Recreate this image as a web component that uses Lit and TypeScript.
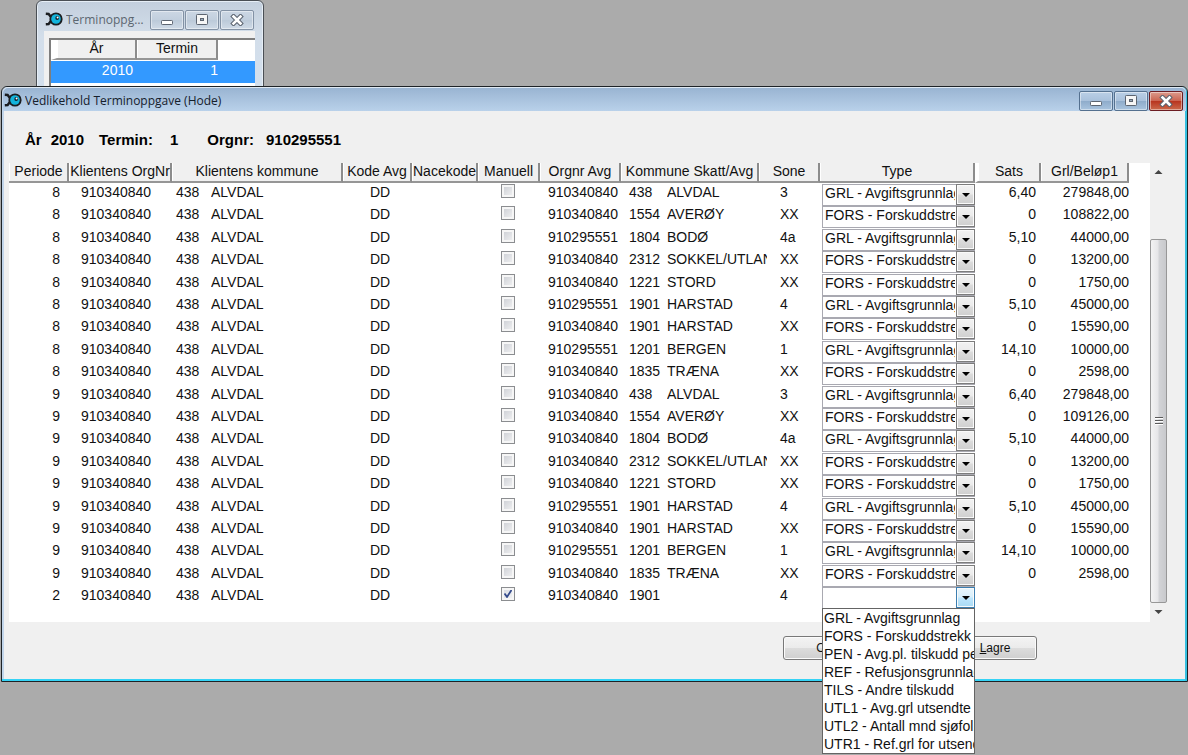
import { LitElement, html, css, svg, nothing } from "lit";
import { customElement, property } from "lit/decorators.js";
import { classMap } from "lit/directives/class-map.js";

interface Row {
  periode: number;
  avgOrg: string;
  nr: string;
  kommune: string;
  sone: string;
  type: string;
  sats: string;
  belop: string;
  manuell?: boolean;
}

const TYPES: Record<string, string> = {
  GRL: "GRL - Avgiftsgrunnlag",
  FORS: "FORS - Forskuddstrekk",
  PEN: "PEN - Avg.pl. tilskudd pensjon",
  REF: "REF - Refusjonsgrunnlag",
  TILS: "TILS - Andre tilskudd",
  UTL1: "UTL1 - Avg.grl utsendte arb.",
  UTL2: "UTL2 - Antall mnd sjøfolk",
  UTR1: "UTR1 - Ref.grl for utsendte",
};

const A = "910340840";
const B = "910295551";

const period = (periode: number, avgBelop: string): Row[] => [
  { periode, avgOrg: A, nr: "438", kommune: "ALVDAL", sone: "3", type: "GRL", sats: "6,40", belop: "279848,00" },
  { periode, avgOrg: A, nr: "1554", kommune: "AVERØY", sone: "XX", type: "FORS", sats: "0", belop: avgBelop },
  { periode, avgOrg: periode === 8 ? B : A, nr: "1804", kommune: "BODØ", sone: "4a", type: "GRL", sats: "5,10", belop: "44000,00" },
  { periode, avgOrg: A, nr: "2312", kommune: "SOKKEL/UTLAND", sone: "XX", type: "FORS", sats: "0", belop: "13200,00" },
  { periode, avgOrg: A, nr: "1221", kommune: "STORD", sone: "XX", type: "FORS", sats: "0", belop: "1750,00" },
  { periode, avgOrg: B, nr: "1901", kommune: "HARSTAD", sone: "4", type: "GRL", sats: "5,10", belop: "45000,00" },
  { periode, avgOrg: A, nr: "1901", kommune: "HARSTAD", sone: "XX", type: "FORS", sats: "0", belop: "15590,00" },
  { periode, avgOrg: B, nr: "1201", kommune: "BERGEN", sone: "1", type: "GRL", sats: "14,10", belop: "10000,00" },
  { periode, avgOrg: A, nr: "1835", kommune: "TRÆNA", sone: "XX", type: "FORS", sats: "0", belop: "2598,00" },
];

const ROWS: Row[] = [
  ...period(8, "108822,00"),
  ...period(9, "109126,00"),
  { periode: 2, avgOrg: A, nr: "1901", kommune: "", sone: "4", type: "", sats: "", belop: "", manuell: true },
];

const HEADS: [string, string][] = [
  ["Periode", "periode"],
  ["Klientens OrgNr", "org"],
  ["Klientens kommune", "kommune"],
  ["Kode Avg", "kode"],
  ["Nacekode", "nace"],
  ["Manuell", "manuell"],
  ["Orgnr Avg", "avgorg"],
  ["Kommune Skatt/Avg", "skatt"],
  ["Sone", "sone"],
  ["Type", "type"],
  ["Sats", "sats"],
  ["Grl/Beløp1", "belop"],
];

@customElement("window-bar")
class WindowBar extends LitElement {
  @property() label = "";
  @property({ type: Boolean, reflect: true }) active = false;

  static styles = css`
    :host { display: flex; align-items: flex-start; gap: 3px; min-width: 0; }
    .icon { flex: none; width: 18px; height: 18px; }
    .title {
      flex: 1; min-width: 0; overflow: hidden; white-space: nowrap; text-overflow: ellipsis;
      font: 12px/19px "Open Sans", "Noto Sans", sans-serif; color: #5c6670; margin: 0;
    }
    .buttons { display: flex; gap: 1px; }
    button {
      width: 34px; height: 20px; padding: 0; box-sizing: border-box; display: grid; place-items: center;
      border: 1px solid #8392a5; border-radius: 2px; box-shadow: inset 0 0 0 1px #ffffff70;
      background: linear-gradient(#ccd7e4, #c2cfde 48%, #bccad9 52%, #cfdae6);
    }
    svg { display: block; }
    :host([active]) .title { color: #15202c; }
    :host([active]) button {
      border-color: #54708f; background: linear-gradient(#bacfe6, #a9c1dc 48%, #8faccb 52%, #a9c4df);
    }
    :host([active]) .close {
      border-color: #6b1c22; background: linear-gradient(#dc9b8d, #cb6552 48%, #b8351f 52%, #cb6a4c);
    }
  `;

  render() {
    return html`
      <svg class="icon" viewBox="0 0 18 18" aria-hidden="true">
        <path d="M.8 3.800L3.600 4 7.500 9 3.600 14 .8 14.200" fill="none" stroke="#1b1d20" stroke-width="2.400"/>
        <circle cx="11" cy="9" r="6.600" fill="#1b1d20"/>
        <circle cx="11" cy="9" r="4.800" fill="#12b4dc"/>
        <circle cx="12.200" cy="8" r="1.900" fill="#10222c"/>
        <circle cx="12.600" cy="7.600" r="1" fill="#fff"/>
      </svg>
      <h2 class="title">${this.label}</h2>
      <div class="buttons">
        <button aria-label="Minimer">
          <svg width="12" height="12"><rect x=".5" y="6.500" width="11" height="4" rx=".8" fill="#fff" stroke="#5c6470"/></svg>
        </button>
        <button aria-label="Maksimer">
          <svg width="12" height="12"><rect x=".5" y=".5" width="11" height="10" rx=".8" fill="#f6f6f6" stroke="#5c6470"/><rect x="4.500" y="4.500" width="3" height="2" fill="#9ab" stroke="#5c6470"/></svg>
        </button>
        <button class="close" aria-label="Lukk">
          <svg width="14" height="12"><path d="M3.500 2.500l7 7M10.500 2.500l-7 7" stroke="#5c6470" stroke-width="4.600" stroke-linecap="square"/><path d="M3.500 2.500l7 7M10.500 2.500l-7 7" stroke="#fff" stroke-width="2.600" stroke-linecap="square"/></svg>
        </button>
      </div>`;
  }
}

@customElement("app-root")
class AppRoot extends LitElement {
  static styles = css`
    :host {
      display: block; position: relative; min-height: 100vh; box-sizing: border-box; padding: 86px 0 0 1px;
      background: #ababab; overflow: hidden; color: #111; font: 14px/17px "Liberation Sans", Arial, sans-serif;
    }
    table { border-collapse: separate; border-spacing: 0; table-layout: fixed; }
    th, td { padding: 0; box-sizing: border-box; white-space: nowrap; }
    th {
      height: 20px; padding: 0 0 1px 1px; font-weight: normal; text-align: center; background: #f0f0f0;
      border-right: 2px solid #8c8c8c; border-bottom: 2px solid #969696; box-shadow: inset 1px 0 #fff;
    }

    .back {
      position: absolute; left: 36px; top: 0; width: 228px; height: 100px; box-sizing: border-box;
      padding: 9px 8px 0 7px; border: 1px solid #4a4f55; border-radius: 6px 6px 0 0;
      background: linear-gradient(#c3cfdd, #d3deea 36px, #d3e0ee); box-shadow: inset 0 0 0 1px #e6eef6;
    }
    .back window-bar { height: 21px; padding: 0 1px; }
    .back .client { background: #f0f0f0; padding: 7px 0 0 5px; }
    .back .list { background: #fff; border: solid #7e7e7e; border-width: 2px 0 0 2px; height: 60px; }
    .back table { width: 100%; }
    .back .c1 { width: 86px; }
    .back .c2 { width: 81px; }
    .back .first { border-left: 6px solid #fff; }
    .back .fill { background: #fff; border: 0; box-shadow: none; }
    .back td { height: 22px; padding-bottom: 3px; background: #3399ff; color: #fff; text-align: right; }
    .back tbody::before { content: ""; display: block; height: 1px; }
    .back .year { padding-right: 4px; }

    .main {
      position: relative; box-sizing: border-box; border: 1px solid #1d2226; border-radius: 6px 6px 0 0;
      padding: 0 1px 1px; background: #f0f0f0;
      box-shadow: inset -2px 0 #35bfe0, inset 0 -2px #35d3f5, inset 2px 0 #c2d5ea;
    }
    .main window-bar {
      height: 24px; box-sizing: border-box; padding: 4px 3px 0 1px; border-radius: 5px 5px 0 0;
      background: linear-gradient(#98b3d1, #b9d1ea); box-shadow: inset 0 1px #dfe9f3;
    }
    .summary { display: flex; margin: 0; padding: 20px 0 15px 22px; font: bold 15px/17px "Liberation Sans", Arial, sans-serif; color: #000; }
    .summary dt, .summary dd { margin: 0; white-space: nowrap; }
    .summary div { display: flex; }
    .summary dt { margin-right: 9px; }
    .summary dd { margin-right: 15px; }
    .summary .termin dt { margin-right: 17px; }
    .summary .termin dd { margin-right: 29px; }
    .summary .orgnr dt { margin-right: 12px; }

    .grid { display: flex; background: #fff; margin: 0 19px 0 6px; height: 459px; }
    .scroller { flex: 1; min-width: 0; }
    .periode { width: 60px; } .org { width: 103px; } .kommune { width: 171px; } .kode { width: 69px; }
    .nace { width: 66px; } .manuell { width: 62px; } .avgorg { width: 81px; } .skatt { width: 138px; }
    .sone { width: 61px; } .type { width: 155px; } .sats { width: 66px; } .belop { width: 88px; }
    .data { width: 1120px; }
    th.sats { border-left: 3px solid #fff; }
    .data tbody::before { content: ""; display: block; height: 1px; }
    .data td { vertical-align: top; height: 22px; }
    .data tr.tall td { height: 23px; }
    td.periode { text-align: right; padding-right: 9px; }
    td.org { padding-left: 12px; }
    td.kommune { padding-left: 4px; }
    td.kode { padding-left: 27px; }
    td.avgorg { padding-left: 8px; }
    td.skatt { padding-left: 8px; }
    td.sone { padding-left: 21px; }
    td.type { padding-left: 2px; position: relative; }
    td.sats { text-align: right; padding-right: 5px; }
    td.belop { text-align: right; }
    .pair { display: flex; }
    .pair .nr { flex: none; width: 35px; }
    .skatt .pair .nr { width: 38px; }
    .name { flex: none; overflow: hidden; width: 100px; }
    .code { display: block; width: 20px; overflow: hidden; }

    input {
      appearance: none; display: block; width: 14px; height: 14px; margin: 0 0 0 23px; box-sizing: border-box;
      border: 1px solid #8b8d90; background: linear-gradient(135deg, #c9ccd2, #f4f4f5);
      box-shadow: inset 0 0 0 2px #f6f6f6;
    }
    input:checked {
      background: url("data:image/svg+xml,%3Csvg xmlns='http://www.w3.org/2000/svg' viewBox='0 0 12 12'%3E%3Cpath d='M2.500 5.500L5 8.900 9.500 2' fill='none' stroke='%23344a8c' stroke-width='1.800'/%3E%3C/svg%3E"), linear-gradient(135deg, #d6dae2, #f4f4f5);
    }
    .combo { display: block; position: relative; height: 22px; }
    .combo::after {
      content: ""; position: absolute; right: 0; top: 0; width: 19px; height: 21px; box-sizing: border-box;
      border: 1px solid #7c7c7c; box-shadow: inset 0 0 0 1px #fafafa; pointer-events: none;
      background:
        url("data:image/svg+xml,%3Csvg xmlns='http://www.w3.org/2000/svg' width='8' height='4'%3E%3Cpath d='M0 0h8L4 4z'/%3E%3C/svg%3E") 5px 8px no-repeat,
        linear-gradient(#f2f2f2, #ebebeb 48%, #dcdcdc 52%, #cfcfcf);
    }
    .combo.open::after {
      border-color: #3c7fb1;
      background:
        url("data:image/svg+xml,%3Csvg xmlns='http://www.w3.org/2000/svg' width='8' height='4'%3E%3Cpath d='M0 0h8L4 4z'/%3E%3C/svg%3E") 5px 8px no-repeat,
        linear-gradient(#e8f5fc, #d8effb 48%, #bee6fd 52%, #a9daf4);
    }
    select {
      appearance: none; display: block; width: 100%; height: 22px; box-sizing: border-box; margin: 0;
      padding: 0 19px 4px 2px; border: 1px solid #a9a9b1; border-radius: 0; background: #fff; color: #111;
      font: inherit; line-height: 16px; outline: 0;
    }
    .options {
      position: absolute; z-index: 2; left: 2px; right: 0; top: 21px; margin: 0; padding: 0; list-style: none;
      border: 1px solid #646464; background: #fff; overflow: hidden;
    }
    .options li { padding-left: 1px; line-height: 18px; white-space: nowrap; }

    .scrollbar { flex: none; width: 17px; display: flex; flex-direction: column; background: #f0f0f0; }
    .scrollbar svg { flex: none; display: block; }
    .before { height: 59px; }
    .thumb {
      flex: 1; display: grid; place-items: center; box-sizing: border-box; border: 1px solid #979797; border-radius: 2px;
      background: linear-gradient(90deg, #f3f3f3, #e6e6e8 45%, #d2d3d6 55%, #c8c9cc);
    }

    .actions { display: flex; justify-content: flex-end; gap: 86px; padding: 14px 149px 20px 0; }
    .actions button {
      width: 84px; height: 24px; padding: 0; border: 1px solid #787878; border-radius: 3px; color: #111;
      background: linear-gradient(#f3f3f3, #ebebeb 48%, #dcdcdc 52%, #cfcfcf); box-shadow: inset 0 0 0 1px #fbfbfb;
      font: 12px/16px "Liberation Sans", Arial, sans-serif;
    }
  `;

  private row(r: Row, i: number) {
    const open = i === ROWS.length - 1;
    return html`<tr class=${classMap({ tall: i % 5 === 1 || i % 5 === 3 })}>
      <td class="periode">${r.periode}</td>
      <td class="org">${A}</td>
      <td class="kommune"><div class="pair"><span class="nr">438</span><span class="name">ALVDAL</span></div></td>
      <td class="kode"><span class="code">DD</span></td>
      <td class="nace"></td>
      <td class="manuell"><input type="checkbox" aria-label="Manuell" .checked=${!!r.manuell}></td>
      <td class="avgorg">${r.avgOrg}</td>
      <td class="skatt"><div class="pair"><span class="nr">${r.nr}</span><span class="name">${r.kommune}</span></div></td>
      <td class="sone">${r.sone}</td>
      <td class="type">
        <span class=${classMap({ combo: true, open })}>
          <select aria-label="Type"><option>${r.type ? TYPES[r.type] : ""}</option></select>
        </span>
        ${open
          ? html`<ul class="options" role="listbox" aria-label="Type">
              ${Object.values(TYPES).map((t) => html`<li role="option">${t}</li>`)}
            </ul>`
          : nothing}
      </td>
      <td class="sats">${r.sats}</td>
      <td class="belop">${r.belop}</td>
    </tr>`;
  }

  render() {
    return html`
      <section class="back">
        <window-bar label="Terminoppgave"></window-bar>
        <div class="client">
          <div class="list">
            <table>
              <thead><tr><th class="c1 first">År</th><th class="c2">Termin</th><th class="fill"></th></tr></thead>
              <tbody><tr><td class="year">2010</td><td>1</td><td></td></tr></tbody>
            </table>
          </div>
        </div>
      </section>

      <section class="main">
        <window-bar active label="Vedlikehold Terminoppgave (Hode)"></window-bar>
        <dl class="summary">
          <div><dt>År</dt><dd>2010</dd></div>
          <div class="termin"><dt>Termin:</dt><dd>1</dd></div>
          <div class="orgnr"><dt>Orgnr:</dt><dd>910295551</dd></div>
        </dl>
        <div class="grid">
          <div class="scroller">
            <table class="data">
              <thead><tr>${HEADS.map(([t, c]) => html`<th class=${c}>${t}</th>`)}</tr></thead>
              <tbody>${ROWS.map((r, i) => this.row(r, i))}</tbody>
            </table>
          </div>
          <div class="scrollbar">
            <svg width="17" height="17"><path d="M4.500 11h8l-4-4z" fill="#454545"/></svg>
            <div class="before"></div>
            <div class="thumb">
              <svg width="8" height="8">${[0, 3, 6].map((y) => svg`<rect y=${y} width="8" height="1" fill="#5a5a5a"/><rect y=${y + 1} width="8" height="1" fill="#fff"/>`)}</svg>
            </div>
            <svg width="17" height="19"><path d="M4.500 7h8l-4 4z" fill="#454545"/></svg>
          </div>
        </div>
        <div class="actions">
          <button>OK</button>
          <button><u>L</u>agre</button>
        </div>
      </section>`;
  }
}
